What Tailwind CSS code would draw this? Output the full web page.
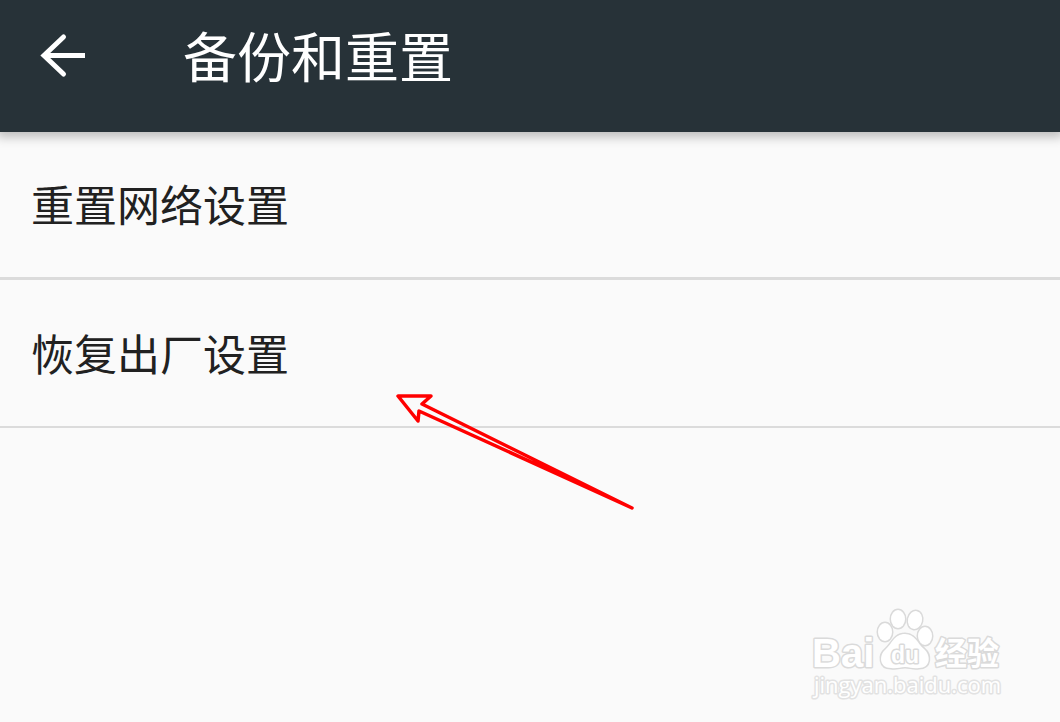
<!DOCTYPE html>
<html lang="zh-CN">

<head>
    <meta charset="UTF-8">
    <meta name="viewport" content="width=device-width, initial-scale=1.0">
    <title>备份和重置</title>
    <script src="https://cdn.jsdelivr.net/npm/@tailwindcss/browser@4"></script>
</head>

<body class="relative min-h-screen overflow-x-hidden bg-[#fafafa] font-['Noto_Sans_CJK_SC',sans-serif] text-[#212121]">
    <header class="flex h-[132px] items-start bg-[#273238] pt-6 pl-8 shadow-[0_2px_10px_3px_rgba(0,0,0,0.25)]">
        <button type="button" aria-label="返回" class="flex h-16 w-16 items-center text-white">
            <svg class="h-16 w-16" viewBox="0 0 64 64" fill="none" stroke="currentColor" stroke-width="5">
                <path d="M53 31.5H14" />
                <path d="M31.5 13 12 31.5 31.5 50" stroke-linecap="round" />
            </svg>
        </button>
        <h1 class="ml-[87px] text-[54px] leading-[62px] text-white">备份和重置</h1>
    </header>

    <!-- Settings list -->
    <main>
        <ul>
            <li class="border-b-3 border-[#dbdbdb]">
                <button type="button" class="block h-[145px] w-full px-[31px] pb-[2px] text-left text-[43px]">重置网络设置</button>
            </li>
            <li class="border-b-2 border-[#dbdbdb]">
                <button type="button" class="block h-[146px] w-full px-[31px] pb-[2px] text-left text-[43px]">恢复出厂设置</button>
            </li>
        </ul>
    </main>

    <!-- Pointer to the factory reset row -->
    <svg class="pointer-events-none absolute top-[390px] left-[390px] h-[124px] w-[250px]" viewBox="0 0 250 124"
        fill="none" stroke="#ff0000" stroke-width="3.5" stroke-linejoin="round">
        <path d="M8 6H41L32 14 242 118 29 21 28 31Z" />
    </svg>

    <!-- Watermark -->
    <svg class="pointer-events-none absolute top-[600px] right-10 h-[104px] w-[210px]" viewBox="0 0 210 104"
        fill="#ffffff" stroke="#dadada" stroke-width="3" paint-order="stroke" stroke-linejoin="round" role="img"
        aria-label="Baidu 经验">
        <text x="2" y="67" font-family="Liberation Sans, sans-serif" font-weight="700" font-size="40">Bai</text>
        <ellipse cx="75" cy="32" rx="7" ry="9" />
        <ellipse cx="88" cy="19" rx="7" ry="9" />
        <ellipse cx="105" cy="20" rx="7" ry="9" transform="rotate(12 105 20)" />
        <ellipse cx="115" cy="36" rx="7" ry="9" />
        <path
            d="M95 34C84 34 82 44 75 50 69 55 69 68 81 68 87 69 90 67 95 67 100 67 103 69 109 68 121 68 121 55 114 49 107 43 105 34 95 34Z" />
        <text x="81" y="63" font-family="Liberation Sans, sans-serif" font-weight="700" font-size="23">du</text>
        <text x="125" y="65" font-family="Noto Sans CJK SC, sans-serif" font-weight="700" font-size="32">经验</text>
        <text x="4" y="93" font-family="Open Sans, sans-serif" font-size="22" stroke="#e2e2e2">jingyan.baidu.com</text>
    </svg>
</body>

</html>
